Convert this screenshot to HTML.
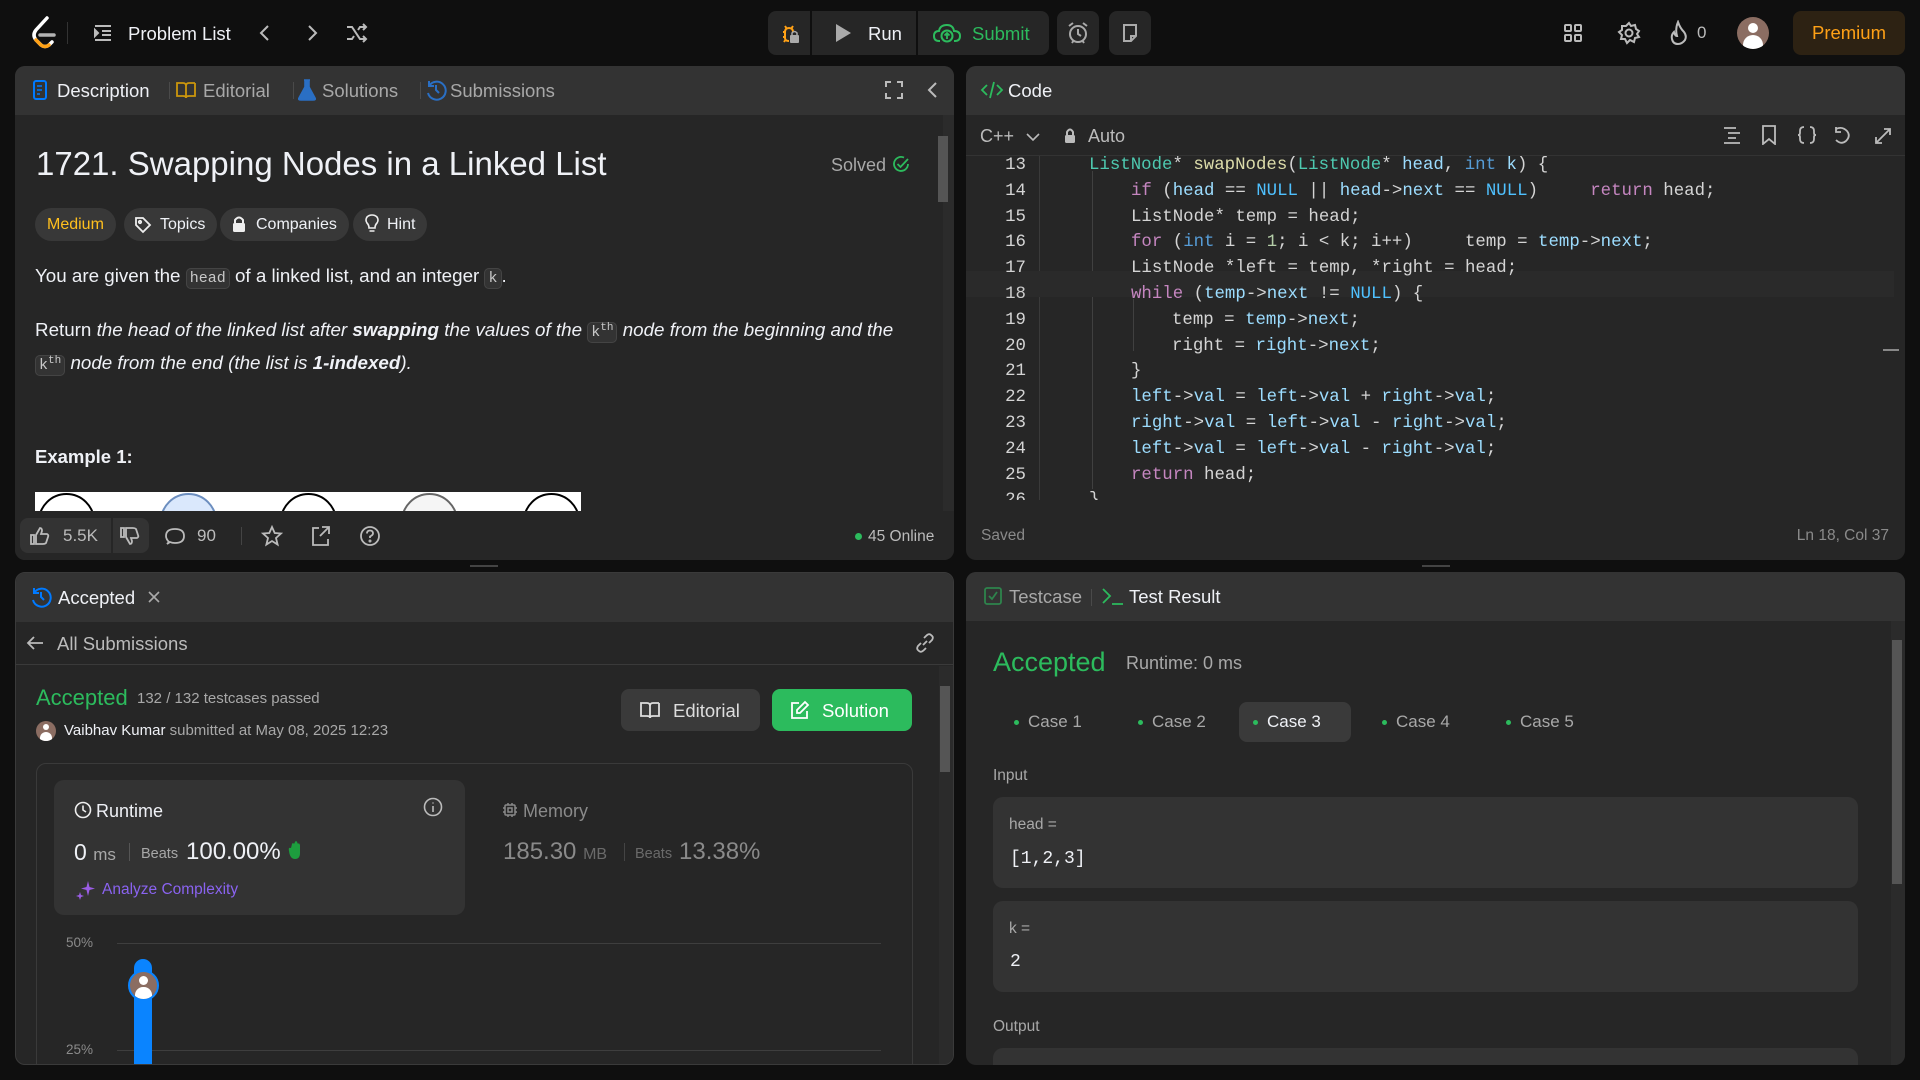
<!DOCTYPE html>
<html><head><meta charset="utf-8"><style>
*{box-sizing:border-box;margin:0;padding:0}
body{width:1920px;height:1080px;background:#0f0f0f;font-family:"Liberation Sans",sans-serif;color:#eff1f6;overflow:hidden;position:relative}
.a{position:absolute}
.panel{position:absolute;background:#262626;border-radius:10px;overflow:hidden}
.ph{position:absolute;left:0;right:0;top:0;height:49px;background:#333}
.t{position:absolute;white-space:nowrap}
.mono{font-family:"Liberation Mono",monospace}
.btn{position:absolute;background:#262626;border-radius:8px}
.tag{position:absolute;top:142px;height:33px;border-radius:17px;background:#383838;font-size:16px;line-height:33px;padding:0 12px;color:#eff1f6}
.code div{position:absolute;left:0;white-space:pre;font-family:"Liberation Mono",monospace;font-size:17.4px;color:#d4d4d4}
.ln{position:absolute;width:60px;text-align:right;font-family:"Liberation Mono",monospace;font-size:17px;color:#858585}
.k{color:#c586c0}.ty{color:#569cd6}.nu{color:#4fc1ff}.v{color:#9cdcfe}.f{color:#dcdcaa}.c{color:#4ec9b0}.n{color:#b5cea8}
.case{position:absolute;top:702px;height:40px;line-height:40px;font-size:17px;color:#a8a8a8;padding:0 14px;border-radius:8px}
.case b{display:inline-block;width:5px;height:5px;border-radius:50%;background:#2cbb5d;margin-right:9px;vertical-align:middle}
.box{position:absolute;left:993px;width:865px;background:#333;border-radius:10px}
.ic{font-size:15px;background:#333;border:1px solid #444;border-radius:5px;padding:1px 3px;color:#c8c8c8}
</style></head><body>

<!-- top bar -->
<svg class="a" style="left:30px;top:16px" width="28" height="34" viewBox="0 0 28 34"><path d="M17 2 L6 14 Q2 19 6 24 L11 29 Q15 32 19 29 L22 26" fill="none" stroke="#fff" stroke-width="3.5" stroke-linecap="round"/><path d="M10 19 H24" stroke="#b3b3b3" stroke-width="3.5" stroke-linecap="round"/><path d="M6 24 L11 29 Q15 32 19 29" fill="none" stroke="#ffa116" stroke-width="3.5" stroke-linecap="round"/></svg>
<div class="a" style="left:67px;top:22px;width:1px;height:22px;background:#333"></div>
<svg class="a" style="left:93px;top:23px" width="20" height="20" viewBox="0 0 20 20" stroke="#bbb" stroke-width="2" fill="none"><path d="M2 3H18M9 8H18M9 12H18M2 17H18"/><path d="M2 7 L5 10 L2 13Z" fill="#bbb"/></svg>
<div class="t" style="left:128px;top:23px;font-size:18.5px;color:#eff1f6">Problem List</div>
<svg class="a" style="left:258px;top:23px" width="14" height="20" viewBox="0 0 14 20"><path d="M10 3 L3 10 L10 17" fill="none" stroke="#bbb" stroke-width="2"/></svg>
<svg class="a" style="left:305px;top:23px" width="14" height="20" viewBox="0 0 14 20"><path d="M4 3 L11 10 L4 17" fill="none" stroke="#bbb" stroke-width="2"/></svg>
<svg class="a" style="left:345px;top:22px" width="24" height="22" viewBox="0 0 24 22" fill="none" stroke="#bbb" stroke-width="2"><path d="M2 5H7L15 17H21M2 17H7L9 14M13 8L15 5H21M18 2L21 5L18 8M18 14L21 17L18 20"/></svg>

<div class="btn" style="left:768px;top:11px;width:42px;height:44px;border-radius:8px 0 0 8px"></div>
<svg class="a" style="left:779px;top:22px" width="22" height="22" viewBox="0 0 22 22"><path d="M6 4 L8 7 M14 4 L12 7 M4 10 H7 M4 15 H7 M5 20 L7 17 M10 6 Q6 6 6 10 V16 Q6 19 10 19 M10 6 Q14 6 14 10" fill="none" stroke="#ffa116" stroke-width="2"/><rect x="11" y="13" width="9" height="8" rx="1" fill="#aaa"/><path d="M13 13 V11 Q15.5 8 18 11 V13" fill="none" stroke="#aaa" stroke-width="1.5"/></svg>
<div class="btn" style="left:812px;top:11px;width:104px;height:44px;border-radius:0"></div>
<svg class="a" style="left:834px;top:23px" width="18" height="20" viewBox="0 0 18 20"><path d="M2 1 L17 10 L2 19Z" fill="#aaa"/></svg>
<div class="t" style="left:868px;top:23px;font-size:18.5px;color:#eff1f6">Run</div>
<div class="btn" style="left:918px;top:11px;width:131px;height:44px;border-radius:0 8px 8px 0"></div>
<svg class="a" style="left:933px;top:23px" width="28" height="20" viewBox="0 0 28 20"><path d="M7 18 H6 Q1 18 1 13 Q1 8 6 8 Q7 2 14 2 Q20 2 21 8 Q27 8 27 13 Q27 18 22 18 H21" fill="none" stroke="#2cbb5d" stroke-width="2"/><circle cx="14" cy="13" r="5.5" fill="none" stroke="#2cbb5d" stroke-width="2"/><path d="M14 16 V10 M11.5 12.5 L14 10 L16.5 12.5" stroke="#2cbb5d" stroke-width="1.8" fill="none"/></svg>
<div class="t" style="left:972px;top:23px;font-size:18.5px;color:#2cbb5d">Submit</div>
<div class="btn" style="left:1057px;top:11px;width:42px;height:44px"></div>
<svg class="a" style="left:1067px;top:21px" width="22" height="24" viewBox="0 0 22 24" fill="none" stroke="#aaa" stroke-width="2"><circle cx="11" cy="13" r="8"/><path d="M11 8 V13 L14 15 M2 5 L6 2 M20 5 L16 2 M5 22 L7 19 M17 22 L15 19"/></svg>
<div class="btn" style="left:1109px;top:11px;width:42px;height:44px"></div>
<svg class="a" style="left:1121px;top:23px" width="18" height="20" viewBox="0 0 18 20" fill="none" stroke="#aaa" stroke-width="2"><path d="M3 2 H15 V13 L10 18 H3Z M15 13 H10 V18"/></svg>

<svg class="a" style="left:1563px;top:23px" width="20" height="20" viewBox="0 0 20 20" fill="none" stroke="#bbb" stroke-width="2"><rect x="2" y="2" width="6" height="6" rx="1"/><rect x="12" y="2" width="6" height="6" rx="1"/><rect x="2" y="12" width="6" height="6" rx="1"/><rect x="12" y="12" width="6" height="6" rx="1"/></svg>
<svg class="a" style="left:1617px;top:21px" width="24" height="24" viewBox="0 0 24 24" fill="none" stroke="#bbb" stroke-width="2"><circle cx="12" cy="12" r="3.5"/><path d="M12 2 L14 5 L18 4 L19 8 L22 10 L20 13 L22 16 L18 17 L17 21 L13 19 L10 22 L8 18 L4 18 L5 14 L2 11 L5 9 L5 5 L9 5Z"/></svg>
<svg class="a" style="left:1669px;top:20px" width="20" height="26" viewBox="0 0 20 26"><path d="M9 2 Q11 8 15 12 Q18 16 16 20 Q13 24 9 24 Q4 24 3 19 Q2 15 5 12 Q6 16 8 16 Q6 9 9 2Z" fill="none" stroke="#bbb" stroke-width="2"/></svg>
<div class="t" style="left:1697px;top:23px;font-size:17px;color:#bbb">0</div>
<div class="a" style="left:1737px;top:17px;width:32px;height:32px;border-radius:50%;background:#8b6d62;overflow:hidden"><div class="a" style="left:11px;top:6px;width:10px;height:10px;border-radius:50%;background:#fff"></div><div class="a" style="left:6px;top:18px;width:20px;height:16px;border-radius:10px 10px 0 0;background:#fff"></div></div>
<div class="a" style="left:1793px;top:11px;width:112px;height:44px;background:#2d2213;border-radius:8px;color:#ffa116;font-size:18.5px;line-height:44px;text-align:center">Premium</div>

<!-- description panel -->
<div class="panel" style="left:15px;top:66px;width:939px;height:494px">
 <div class="ph"></div>
 <svg class="a" style="left:18px;top:14px" width="14" height="20" viewBox="0 0 14 20"><rect x="1" y="1" width="12" height="18" rx="2" fill="none" stroke="#007aff" stroke-width="2"/><path d="M4 6H9M4 10H9M4 14H7" stroke="#007aff" stroke-width="1.6"/></svg>
 <div class="t" style="left:42px;top:14px;font-size:18.5px;color:#eff1f6">Description</div>
 <div class="a" style="left:154px;top:16px;width:1px;height:17px;background:#4a4a4a"></div>
 <svg class="a" style="left:161px;top:15px" width="20" height="18" viewBox="0 0 20 18" fill="none" stroke="#ffb800" stroke-opacity=".75" stroke-width="1.8"><path d="M1 2 H7 Q10 2 10 5 V17 Q10 15 7 15 H1Z M19 2 H13 Q10 2 10 5 M19 2 V15 H13 Q10 15 10 17"/></svg>
 <div class="t" style="left:188px;top:14px;font-size:18.5px;color:#a8a8a8">Editorial</div>
 <div class="a" style="left:278px;top:16px;width:1px;height:17px;background:#4a4a4a"></div>
 <svg class="a" style="left:283px;top:13px" width="18" height="22" viewBox="0 0 18 22"><path d="M6 1 H12 M7 1 V8 L1 19 Q0 21 3 21 H15 Q18 21 17 19 L11 8 V1" fill="#2a6fc4" stroke="#2a6fc4" stroke-width="1.6"/></svg>
 <div class="t" style="left:307px;top:14px;font-size:18.5px;color:#a8a8a8">Solutions</div>
 <div class="a" style="left:405px;top:16px;width:1px;height:17px;background:#4a4a4a"></div>
 <svg class="a" style="left:410px;top:13px" width="22" height="22" viewBox="0 0 22 22" fill="none" stroke="#2a6fc4" stroke-width="2"><path d="M4 7 A9 9 0 1 1 3 14 M4 2 V7 H9 M11 6 V11 L14 14"/></svg>
 <div class="t" style="left:435px;top:14px;font-size:18.5px;color:#a8a8a8">Submissions</div>
 <svg class="a" style="left:870px;top:15px" width="18" height="18" viewBox="0 0 18 18" fill="none" stroke="#bbb" stroke-width="2"><path d="M1 6V1H6M12 1H17V6M17 12V17H12M6 17H1V12"/></svg>
 <svg class="a" style="left:911px;top:14px" width="12" height="20" viewBox="0 0 12 20"><path d="M10 3 L3 10 L10 17" fill="none" stroke="#bbb" stroke-width="2"/></svg>
 <div class="a" style="left:928px;top:49px;width:11px;height:397px;background:#2b2b2b"></div>
 <div class="a" style="left:923px;top:70px;width:10px;height:66px;background:#555"></div>

 <div class="t" style="left:21px;top:79px;font-size:33px;font-weight:500;color:#eff1f6">1721. Swapping Nodes in a Linked List</div>
 <div class="t" style="left:816px;top:89px;font-size:18px;color:#a8a8a8">Solved</div>
 <svg class="a" style="left:877px;top:89px" width="18" height="18" viewBox="0 0 18 18" fill="none" stroke="#2cbb5d" stroke-width="1.8"><path d="M16 9 A7 7 0 1 1 12 2.6"/><path d="M5.5 9 L8.5 12 L16 4"/></svg>
 <div class="tag" style="left:20px;color:#ffc01e">Medium</div>
 <div class="tag" style="left:109px;padding-left:36px">Topics</div>
 <svg class="a" style="left:119px;top:150px" width="18" height="18" viewBox="0 0 18 18" fill="none" stroke="#eee" stroke-width="1.8"><path d="M2 2 H9 L16 9 L9 16 L2 9Z"/><circle cx="6" cy="6" r="1.2"/></svg>
 <div class="tag" style="left:205px;padding-left:36px">Companies</div>
 <svg class="a" style="left:217px;top:149px" width="14" height="18" viewBox="0 0 14 18"><path d="M3 8 V5 Q7 0 11 5 V8" fill="none" stroke="#eee" stroke-width="2"/><rect x="1" y="8" width="12" height="9" rx="1.5" fill="#eee"/></svg>
 <div class="tag" style="left:338px;padding-left:34px">Hint</div>
 <svg class="a" style="left:349px;top:148px" width="16" height="20" viewBox="0 0 16 20" fill="none" stroke="#eee" stroke-width="1.6"><path d="M5 14 Q5 11 3 9 Q1 6 3 3 Q5 1 8 1 Q11 1 13 3 Q15 6 13 9 Q11 11 11 14Z M5.5 17 H10.5"/></svg>

 <div class="t" style="left:20px;top:199px;font-size:18.8px;color:#eff1f6">You are given the <span class="mono ic">head</span> of a linked list, and an integer <span class="mono ic">k</span>.</div>
 <div class="t" style="left:20px;top:248px;font-size:18.8px;color:#eff1f6;line-height:28px">Return <i>the head of the linked list after <b>swapping</b> the values of the </i><span class="mono ic">k<sup style="font-size:11px">th</sup></span> <i>node from the beginning and the</i><br><span class="mono ic">k<sup style="font-size:11px">th</sup></span> <i>node from the end (the list is <b>1-indexed</b>).</i></div>
 <div class="t" style="left:20px;top:380px;font-size:18.5px;font-weight:bold;color:#eff1f6">Example 1:</div>
</div>
<!-- image strip & footer overlay -->
<div class="a" style="left:35px;top:492px;width:546px;height:19px;background:#fff;overflow:hidden">
 <div class="a" style="left:3px;top:1px;width:57px;height:57px;border-radius:50%;border:2px solid #000"></div>
 <div class="a" style="left:125px;top:1px;width:57px;height:57px;border-radius:50%;border:2px solid #6c8ebf;background:#dae8fc"></div>
 <div class="a" style="left:245px;top:1px;width:57px;height:57px;border-radius:50%;border:2px solid #000"></div>
 <div class="a" style="left:366px;top:1px;width:57px;height:57px;border-radius:50%;border:2px solid #666;background:#f5f5f5"></div>
 <div class="a" style="left:488px;top:1px;width:57px;height:57px;border-radius:50%;border:2px solid #000"></div>
</div>
<div class="a" style="left:15px;top:511px;width:939px;height:49px;background:#262626;border-radius:0 0 10px 10px"></div>
<div class="a" style="left:20px;top:518px;width:129px;height:35px;background:#333;border-radius:8px"></div>
<div class="a" style="left:111px;top:518px;width:2px;height:35px;background:#262626"></div>
<svg class="a" style="left:30px;top:526px" width="20" height="20" viewBox="0 0 20 20" fill="none" stroke="#bbb" stroke-width="1.8"><path d="M1 9H4V18H1Z M6 9 L10 2 Q12 2 12 5 L11 8 H17 Q19 9 18 11 L16 17 Q15 18 13 18 H6Z"/></svg>
<div class="t" style="left:63px;top:526px;font-size:17px;color:#bbb">5.5K</div>
<svg class="a" style="left:120px;top:526px" width="20" height="20" viewBox="0 0 20 20" fill="none" stroke="#bbb" stroke-width="1.8"><path d="M1 2H4V11H1Z M6 11 L10 18 Q12 18 12 15 L11 12 H17 Q19 11 18 9 L16 3 Q15 2 13 2 H6Z"/></svg>
<svg class="a" style="left:165px;top:526px" width="20" height="20" viewBox="0 0 20 20" fill="none" stroke="#bbb" stroke-width="1.8"><path d="M4 16 Q1 13 1 10 Q1 3 10 3 Q19 3 19 10 Q19 17 10 17 Q7 17 5 16 L2 18Z"/></svg>
<div class="t" style="left:197px;top:526px;font-size:17px;color:#bbb">90</div>
<div class="a" style="left:241px;top:527px;width:1px;height:18px;background:#444"></div>
<svg class="a" style="left:261px;top:525px" width="22" height="22" viewBox="0 0 22 22" fill="none" stroke="#bbb" stroke-width="1.8"><path d="M11 2 L13.7 8 L20 8.5 L15 13 L16.6 19.5 L11 16 L5.4 19.5 L7 13 L2 8.5 L8.3 8Z"/></svg>
<svg class="a" style="left:311px;top:525px" width="20" height="22" viewBox="0 0 20 22" fill="none" stroke="#bbb" stroke-width="1.8"><path d="M8 3H2V20H17V14 M11 2H18V9 M18 2 L9 11"/></svg>
<svg class="a" style="left:359px;top:525px" width="22" height="22" viewBox="0 0 22 22" fill="none" stroke="#bbb" stroke-width="1.8"><circle cx="11" cy="11" r="9"/><path d="M8 8.5 Q8 5.5 11 5.5 Q14 5.5 14 8.5 Q14 10 11 11.5 V13"/><circle cx="11" cy="16" r=".6"/></svg>
<div class="a" style="left:855px;top:533px;width:7px;height:7px;border-radius:50%;background:#2cbb5d"></div>
<div class="t" style="left:868px;top:528px;font-size:15.5px;color:#bbb">45 Online</div>

<!-- code panel -->
<div class="panel" style="left:966px;top:66px;width:939px;height:494px">
 <div class="ph"></div>
 <svg class="a" style="left:14px;top:14px" width="24" height="20" viewBox="0 0 24 20" fill="none" stroke="#2cbb5d" stroke-width="1.8"><path d="M7 5 L2 10 L7 15 M17 5 L22 10 L17 15 M14 2 L10 18"/></svg>
 <div class="t" style="left:42px;top:14px;font-size:18.5px;color:#eff1f6">Code</div>
 <div class="t" style="left:14px;top:60px;font-size:18px;color:#bbb">C++</div>
 <svg class="a" style="left:60px;top:66px" width="14" height="10" viewBox="0 0 14 10"><path d="M1 2 L7 8 L13 2" fill="none" stroke="#bbb" stroke-width="1.6"/></svg>
 <svg class="a" style="left:98px;top:61px" width="12" height="17" viewBox="0 0 12 17"><path d="M3 8 V5 Q6 0 9 5 V8" fill="none" stroke="#bbb" stroke-width="2"/><rect x="1" y="8" width="10" height="8" rx="1.5" fill="#bbb"/></svg>
 <div class="t" style="left:122px;top:60px;font-size:18px;color:#bbb">Auto</div>
 <svg class="a" style="left:758px;top:59px" width="170" height="20" viewBox="0 0 170 20" fill="none" stroke="#bbb" stroke-width="1.8"><path d="M0 3H12M4 8H16M4 13H12M0 18H16"/><path d="M39 1H51V19L45 14L39 19Z"/><path d="M80 2 Q76 2 76 6 V8 Q76 10 74 10 Q76 10 76 12 V14 Q76 18 80 18 M86 2 Q90 2 90 6 V8 Q90 10 92 10 Q90 10 90 12 V14 Q90 18 86 18"/><path d="M112 4 Q118 1 123 6 Q127 11 122 16 Q117 20 112 15 M112 2 V7 H117"/><path d="M152 18 L166 4 M152 12 V18 H158 M160 4 H166 V10"/></svg>
 <div class="a" style="left:0;top:89px;right:0;height:1px;background:#333"></div>
 <div class="a code" style="left:0;top:90px;width:939px;height:344px;overflow:hidden">
  <div class="a" style="left:73px;top:0;width:1px;height:345px;background:#3a3a3a"></div>
  <div class="a" style="left:126px;top:15px;width:1px;height:318px;background:#404040"></div>
  <div class="a" style="left:167px;top:143px;width:1px;height:52px;background:#404040"></div>
  <div class="a" style="left:0;top:115px;width:928px;height:26px;background:#2a2a2a"></div>
  <div class="a" style="left:917px;top:193px;width:16px;height:2px;background:#888"></div>
  <div class="ln" style="left:0;top:0px">13</div><div class="ln" style="left:0;top:25.8px">14</div><div class="ln" style="left:0;top:51.6px">15</div><div class="ln" style="left:0;top:77.4px">16</div><div class="ln" style="left:0;top:103.2px">17</div><div class="ln" style="left:0;top:129px;color:#ccc">18</div><div class="ln" style="left:0;top:154.8px">19</div><div class="ln" style="left:0;top:180.6px">20</div><div class="ln" style="left:0;top:206.4px">21</div><div class="ln" style="left:0;top:232.2px">22</div><div class="ln" style="left:0;top:258px">23</div><div class="ln" style="left:0;top:283.8px">24</div><div class="ln" style="left:0;top:309.6px">25</div><div class="ln" style="left:0;top:335.4px">26</div>
  <div style="left:123px;top:0px"><span class="c">ListNode</span>* <span class="f">swapNodes</span>(<span class="c">ListNode</span>* <span class="v">head</span>, <span class="ty">int</span> <span class="v">k</span>) {</div>
  <div style="left:165px;top:25.8px"><span class="k">if</span> (<span class="v">head</span> == <span class="nu">NULL</span> || <span class="v">head</span>-&gt;<span class="v">next</span> == <span class="nu">NULL</span>)     <span class="k">return</span> head;</div>
  <div style="left:165px;top:51.6px">ListNode* temp = head;</div>
  <div style="left:165px;top:77.4px"><span class="k">for</span> (<span class="ty">int</span> i = <span class="n">1</span>; i &lt; k; i++)     temp = <span class="v">temp</span>-&gt;<span class="v">next</span>;</div>
  <div style="left:165px;top:103.2px">ListNode *left = temp, *right = head;</div>
  <div style="left:165px;top:129px"><span class="k">while</span> (<span class="v">temp</span>-&gt;<span class="v">next</span> != <span class="nu">NULL</span>) {</div>
  <div style="left:206px;top:154.8px">temp = <span class="v">temp</span>-&gt;<span class="v">next</span>;</div>
  <div style="left:206px;top:180.6px">right = <span class="v">right</span>-&gt;<span class="v">next</span>;</div>
  <div style="left:165px;top:206.4px">}</div>
  <div style="left:165px;top:232.2px"><span class="v">left</span>-&gt;<span class="v">val</span> = <span class="v">left</span>-&gt;<span class="v">val</span> + <span class="v">right</span>-&gt;<span class="v">val</span>;</div>
  <div style="left:165px;top:258px"><span class="v">right</span>-&gt;<span class="v">val</span> = <span class="v">left</span>-&gt;<span class="v">val</span> - <span class="v">right</span>-&gt;<span class="v">val</span>;</div>
  <div style="left:165px;top:283.8px"><span class="v">left</span>-&gt;<span class="v">val</span> = <span class="v">left</span>-&gt;<span class="v">val</span> - <span class="v">right</span>-&gt;<span class="v">val</span>;</div>
  <div style="left:165px;top:309.6px"><span class="k">return</span> head;</div>
  <div style="left:123px;top:335.4px">}</div>
 </div>
 <div class="t" style="left:15px;top:461px;font-size:15.5px;color:#8a8a8a">Saved</div>
 <div class="t" style="right:16px;top:461px;font-size:15.5px;color:#8a8a8a">Ln 18, Col 37</div>
</div>
<div class="a" style="left:470px;top:565px;width:28px;height:2px;background:#444"></div>
<div class="a" style="left:1422px;top:565px;width:28px;height:2px;background:#444"></div>

<!-- submission panel -->
<div class="panel" style="left:15px;top:572px;width:939px;height:493px;border:1px solid #3a3a3a">
 <div class="ph"></div>
 <svg class="a" style="left:14px;top:13px" width="22" height="22" viewBox="0 0 22 22" fill="none" stroke="#007aff" stroke-width="2"><path d="M4 7 A9 9 0 1 1 3 14 M4 2 V7 H9 M11 6 V11 L14 14"/></svg>
 <div class="t" style="left:42px;top:14px;font-size:18.5px;color:#eff1f6">Accepted</div>
 <svg class="a" style="left:131px;top:17px" width="14" height="14" viewBox="0 0 14 14"><path d="M2 2 L12 12 M12 2 L2 12" stroke="#aaa" stroke-width="1.6"/></svg>
 <div class="a" style="left:0;top:49px;right:0;height:43px;border-bottom:1px solid #3a3a3a"></div>
 <svg class="a" style="left:10px;top:61px" width="18" height="18" viewBox="0 0 18 18" fill="none" stroke="#bbb" stroke-width="1.8"><path d="M17 9H2 M8 3 L2 9 L8 15"/></svg>
 <div class="t" style="left:41px;top:60px;font-size:18.5px;color:#bbb">All Submissions</div>
 <svg class="a" style="left:898px;top:59px" width="22" height="22" viewBox="0 0 22 22" fill="none" stroke="#bbb" stroke-width="1.8"><path d="M9 13 L13 9 M7 11 L4 14 Q2 17 5 19 Q7 21 10 18 L12 16 M15 11 L18 8 Q20 5 17 3 Q15 1 12 4 L10 6"/></svg>
 <div class="a" style="left:923px;top:93px;width:16px;height:400px;background:#2b2b2b"></div>
 <div class="a" style="left:924px;top:113px;width:10px;height:86px;background:#555"></div>
 <div class="t" style="left:20px;top:112px;font-size:22px;color:#2cbb5d">Accepted</div>
 <div class="t" style="left:121px;top:117px;font-size:15px;color:#a8a8a8">132 / 132 testcases passed</div>
 <div class="a" style="left:20px;top:148px;width:20px;height:20px;border-radius:50%;background:#8b6d62;overflow:hidden"><div class="a" style="left:7px;top:3px;width:6px;height:6px;border-radius:50%;background:#fff"></div><div class="a" style="left:4px;top:11px;width:12px;height:10px;border-radius:6px 6px 0 0;background:#fff"></div></div>
 <div class="t" style="left:48px;top:149px;font-size:15px;color:#a8a8a8"><span style="color:#eff1f6">Vaibhav Kumar</span> submitted at May 08, 2025 12:23</div>
 <div class="a" style="left:605px;top:116px;width:139px;height:42px;background:#3a3a3a;border-radius:8px"></div>
 <svg class="a" style="left:623px;top:128px" width="22" height="18" viewBox="0 0 20 18" fill="none" stroke="#ddd" stroke-width="1.8"><path d="M1 2 H7 Q10 2 10 5 V17 Q10 15 7 15 H1Z M19 2 H13 Q10 2 10 5 M19 2 V15 H13 Q10 15 10 17"/></svg>
 <div class="t" style="left:657px;top:127px;font-size:18.5px;color:#ddd">Editorial</div>
 <div class="a" style="left:756px;top:116px;width:140px;height:42px;background:#2cbb5d;border-radius:8px"></div>
 <svg class="a" style="left:774px;top:127px" width="20" height="20" viewBox="0 0 20 20" fill="none" stroke="#fff" stroke-width="1.8"><path d="M9 3H2V18H17V11 M15 2 L18 5 L10 13 H7 V10Z"/></svg>
 <div class="t" style="left:806px;top:127px;font-size:18.5px;color:#fff">Solution</div>

 <div class="a" style="left:20px;top:190px;width:877px;height:320px;border:1px solid #3a3a3a;border-radius:10px"></div>
 <div class="a" style="left:38px;top:207px;width:411px;height:135px;background:#333;border-radius:10px"></div>
 <svg class="a" style="left:58px;top:228px" width="18" height="18" viewBox="0 0 18 18" fill="none" stroke="#eee" stroke-width="1.6"><circle cx="9" cy="9" r="7.5"/><path d="M9 4.5 V9 L12 11"/></svg>
 <div class="t" style="left:80px;top:228px;font-size:18px;color:#eff1f6">Runtime</div>
 <svg class="a" style="left:407px;top:224px" width="20" height="20" viewBox="0 0 20 20" fill="none" stroke="#bbb" stroke-width="1.6"><circle cx="10" cy="10" r="8.5"/><path d="M10 9 V15 M10 5.5 V6.5"/></svg>
 <div class="t" style="left:58px;top:266px;font-size:23px;font-weight:500;color:#eff1f6">0 <span style="font-size:17px;color:#a8a8a8;font-weight:normal">ms</span></div>
 <div class="a" style="left:113px;top:270px;width:1px;height:18px;background:#555"></div>
 <div class="t" style="left:125px;top:273px;font-size:14.5px;color:#a8a8a8">Beats</div>
 <div class="t" style="left:170px;top:265px;font-size:24px;font-weight:500;color:#eff1f6">100.00%</div>
 <svg class="a" style="left:270px;top:266px" width="18" height="22" viewBox="0 0 18 22"><path d="M3 12 Q2 8 5 9 L6 5 Q7 3 8 5 L9 3 Q10 1 11 3 L12 5 Q13 3 14 6 L14 14 Q14 20 9 20 Q4 20 3 12Z" fill="#1d9d3e"/></svg>
 <svg class="a" style="left:60px;top:307px" width="20" height="20" viewBox="0 0 20 20"><path d="M12 1 L13.5 7 L19 8.5 L13.5 10 L12 16 L10.5 10 L5 8.5 L10.5 7Z" fill="#9b5de5"/><path d="M4 12 L5 15 L8 16 L5 17 L4 20 L3 17 L0 16 L3 15Z" fill="#9b5de5"/></svg>
 <div class="t" style="left:86px;top:308px;font-size:15.5px;color:#8a63f0">Analyze Complexity</div>
 <svg class="a" style="left:486px;top:229px" width="16" height="16" viewBox="0 0 16 16" fill="none" stroke="#8a8a8a" stroke-width="1.5"><rect x="3" y="3" width="10" height="10" rx="1"/><rect x="6" y="6" width="4" height="4"/><path d="M6 1V3M10 1V3M6 13V15M10 13V15M1 6H3M1 10H3M13 6H15M13 10H15"/></svg>
 <div class="t" style="left:507px;top:228px;font-size:18px;color:#8a8a8a">Memory</div>
 <div class="t" style="left:487px;top:265px;font-size:24px;font-weight:500;color:#8a8a8a">185.30 <span style="font-size:16px;color:#6a6a6a;font-weight:normal">MB</span></div>
 <div class="a" style="left:608px;top:270px;width:1px;height:18px;background:#444"></div>
 <div class="t" style="left:619px;top:273px;font-size:14.5px;color:#6a6a6a">Beats</div>
 <div class="t" style="left:663px;top:265px;font-size:24px;font-weight:500;color:#8a8a8a">13.38%</div>

 <div class="t" style="left:50px;top:362px;font-size:13.5px;color:#8a8a8a">50%</div>
 <div class="t" style="left:50px;top:469px;font-size:13.5px;color:#8a8a8a">25%</div>
 <div class="a" style="left:101px;top:370px;width:764px;height:1px;background:#3e3e3e"></div>
 <div class="a" style="left:101px;top:477px;width:764px;height:1px;background:#3e3e3e"></div>
 <div class="a" style="left:118px;top:386px;width:18px;height:120px;background:#0a84ff;border-radius:9px 9px 0 0"></div>
 <div class="a" style="left:112px;top:397px;width:31px;height:31px;border-radius:50%;background:#8b6d62;border:2px solid #0a84ff;overflow:hidden"><div class="a" style="left:9px;top:4px;width:9px;height:9px;border-radius:50%;background:#fff"></div><div class="a" style="left:5px;top:15px;width:17px;height:14px;border-radius:8px 8px 0 0;background:#fff"></div></div>
</div>

<!-- test result panel -->
<div class="panel" style="left:966px;top:572px;width:939px;height:493px">
 <div class="ph"></div>
 <svg class="a" style="left:18px;top:14px" width="18" height="20" viewBox="0 0 18 20" fill="none" stroke="#2cbb5d" stroke-opacity=".6" stroke-width="1.8"><rect x="1" y="2" width="16" height="16" rx="2"/><path d="M5 10 L8 13 L13 6"/></svg>
 <div class="t" style="left:43px;top:14px;font-size:18.5px;color:#a8a8a8">Testcase</div>
 <div class="a" style="left:125px;top:17px;width:1px;height:17px;background:#4a4a4a"></div>
 <svg class="a" style="left:135px;top:14px" width="24" height="20" viewBox="0 0 24 20" fill="none" stroke="#2cbb5d" stroke-width="1.8"><path d="M2 3 L9 10 L2 17 M11 18 H22"/></svg>
 <div class="t" style="left:163px;top:14px;font-size:18.5px;color:#eff1f6">Test Result</div>
 <div class="a" style="left:925px;top:49px;width:14px;height:444px;background:#2b2b2b"></div>
 <div class="a" style="left:926px;top:68px;width:10px;height:244px;background:#555"></div>
 <div class="t" style="left:27px;top:75px;font-size:27px;color:#2cbb5d">Accepted</div>
 <div class="t" style="left:160px;top:81px;font-size:18px;color:#a8a8a8">Runtime: 0 ms</div>
</div>
<div class="case" style="left:1000px"><b></b>Case 1</div>
<div class="case" style="left:1124px"><b></b>Case 2</div>
<div class="case" style="left:1239px;width:112px;background:#3a3a3a;color:#eff1f6"><b></b>Case 3</div>
<div class="case" style="left:1368px"><b></b>Case 4</div>
<div class="case" style="left:1492px"><b></b>Case 5</div>
<div class="t" style="left:993px;top:767px;font-size:15.5px;color:#a8a8a8">Input</div>
<div class="box" style="top:797px;height:91px"></div>
<div class="t" style="left:1009px;top:816px;font-size:15.5px;color:#a8a8a8">head =</div>
<div class="t mono" style="left:1010px;top:849px;font-size:18px;color:#eff1f6">[1,2,3]</div>
<div class="box" style="top:901px;height:91px"></div>
<div class="t" style="left:1009px;top:920px;font-size:15.5px;color:#a8a8a8">k =</div>
<div class="t mono" style="left:1010px;top:952px;font-size:18px;color:#eff1f6">2</div>
<div class="t" style="left:993px;top:1018px;font-size:15.5px;color:#a8a8a8">Output</div>
<div class="box" style="top:1048px;height:17px;border-radius:10px 10px 0 0"></div>
</body></html>
